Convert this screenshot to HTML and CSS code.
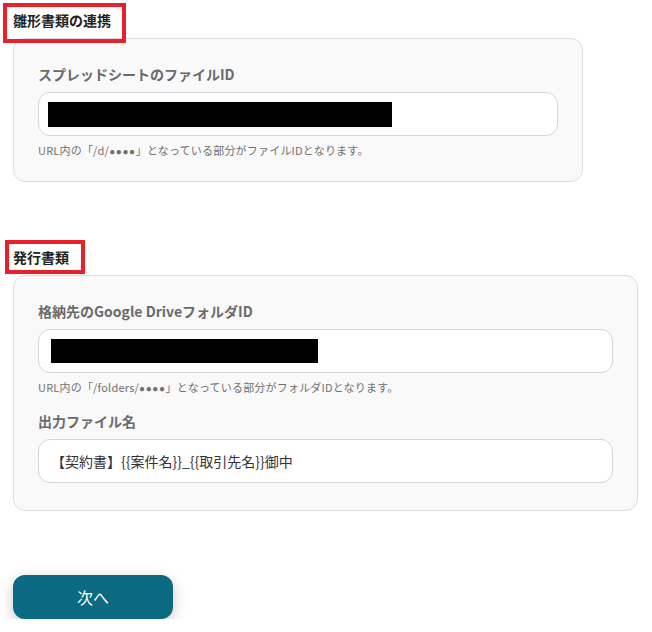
FILE: index.html
```html
<!DOCTYPE html>
<html lang="ja">
<head>
<meta charset="utf-8">
<link rel="stylesheet" href="styles.css">
</head>
<body>
<main class="page">
  <section class="section">
    <h2 class="heading">雛形書類の連携<span class="mark mark-a"></span></h2>
    <div class="card card-a">
      <div class="field">
        <label class="label">スプレッドシートのファイルID</label>
        <div class="input redacted-a"><span class="redact redact-a"></span></div>
        <p class="help">URL内の「/d/<span class="dots">●●●●</span>」となっている部分がファイルIDとなります。</p>
      </div>
    </div>
  </section>

  <section class="section section-b">
    <h2 class="heading">発行書類<span class="mark mark-b"></span></h2>
    <div class="card card-b">
      <div class="field">
        <label class="label">格納先のGoogle DriveフォルダID</label>
        <div class="input redacted-b"><span class="redact redact-b"></span></div>
        <p class="help">URL内の「/folders/<span class="dots">●●●●</span>」となっている部分がフォルダIDとなります。</p>
      </div>
      <div class="field field-last">
        <label class="label">出力ファイル名</label>
        <div class="input text-input">【契約書】{{案件名}}_{{取引先名}}御中</div>
      </div>
    </div>
  </section>

  <button class="next">次へ</button>
</main>
</body>
</html>
```

FILE: styles.css
```css
* { box-sizing: border-box; }
html, body { margin: 0; padding: 0; background: #ffffff; }
body {
  font-family: "Noto Sans CJK JP", "Noto Sans", sans-serif;
  color: #333;
}
.page {
  padding: 10px 0 0 13px;
}
.section { display: flex; flex-direction: column; align-items: flex-start; }
.section-b { margin-top: 65px; }
.heading {
  position: relative;
  margin: 0 0 8px 0;
  font-size: 14px;
  line-height: 20px;
  font-weight: 700;
  color: #222;
}
.mark {
  position: absolute;
  border: 4px solid #e8202a;
  pointer-events: none;
}
.mark-a { left: -10px; top: -7px; width: 123px; height: 40px; }
.mark-b { left: -8px; top: -7px; width: 80px; height: 34px; }

.card {
  background: #f9f9fa;
  border: 1px solid #dcdde2;
  border-radius: 12px;
  padding: 25px 24px 23px 24px;
  display: flex;
  flex-direction: column;
  gap: 16px;
}
.card-a { width: 570px; }
.card-b { width: 625px; padding-bottom: 27px; }

.field { display: flex; flex-direction: column; }
.label {
  font-size: 14px;
  line-height: 20px;
  font-weight: 700;
  color: #6a6a6a;
  margin-bottom: 8px;
}
.input {
  height: 44px;
  background: #fff;
  border: 1px solid #d3d5db;
  border-radius: 12px;
  display: flex;
  align-items: center;
}
.redacted-a { padding-left: 9px; }
.redacted-b { padding-left: 12px; }
.redact { display: block; background: #000; }
.redact-a { width: 344px; height: 25px; }
.redact-b { width: 267px; height: 24px; }
.text-input {
  padding: 0 12px;
  font-size: 14px;
  color: #333;
}
.help {
  margin: 6px 0 0 0;
  font-size: 11px;
  line-height: 16px;
  height: 16px;
  color: #707070;
  letter-spacing: 0.2px;
}
.dots {
  font-family: "Liberation Sans", sans-serif;
  font-size: 10px;
  line-height: 0;
  letter-spacing: 0.6px;
}

.next {
  margin-top: 64px;
  width: 160px;
  height: 44px;
  border: none;
  border-radius: 12px;
  background: #0b6982;
  color: #fff;
  font-family: "Noto Sans CJK JP", "Noto Sans", sans-serif;
  font-size: 16px;
  box-shadow: 0 4px 14px rgba(0, 0, 0, 0.22);
  display: block;
}
```
